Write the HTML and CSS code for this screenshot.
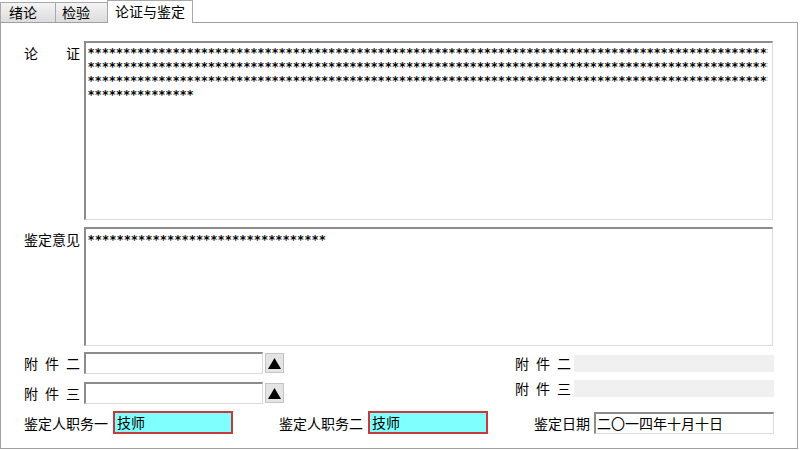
FILE: index.html
```html
<!DOCTYPE html>
<html lang="zh">
<head>
<meta charset="utf-8">
<title>论证与鉴定</title>
<link rel="stylesheet" href="styles.css">
</head>
<body>
<div class="tabs">
  <div class="tab tab-first">绪论</div>
  <div class="tab tab-second">检验</div>
  <div class="tab tab-active">论证与鉴定</div>
</div>
<div class="panel">
  <div class="row-area">
    <div class="label label-spread"><span>论</span><span>证</span></div>
    <div class="area area-big">
      <div class="stars">*************************************************************************************************</div>
      <div class="stars">*************************************************************************************************</div>
      <div class="stars">*************************************************************************************************</div>
      <div class="stars">***************</div>
    </div>
  </div>
  <div class="row-area row-second">
    <div class="label">鉴定意见</div>
    <div class="area area-small"><div class="stars">*********************************</div></div>
  </div>
  <div class="attach">
    <div class="attach-left">
      <div class="attach-row">
        <div class="label label-spread"><span>附</span><span>件</span><span>二</span></div>
        <div class="input input-file"></div>
        <div class="btn"><svg width="13" height="11" viewBox="0 0 13 11"><polygon points="6.5,0 13,11 0,11" fill="#000"/></svg></div>
      </div>
      <div class="attach-row">
        <div class="label label-spread"><span>附</span><span>件</span><span>三</span></div>
        <div class="input input-file"></div>
        <div class="btn"><svg width="13" height="11" viewBox="0 0 13 11"><polygon points="6.5,0 13,11 0,11" fill="#000"/></svg></div>
      </div>
    </div>
    <div class="attach-right">
      <div class="attach-row-r">
        <div class="label label-spread"><span>附</span><span>件</span><span>二</span></div>
        <div class="ro-field"></div>
      </div>
      <div class="attach-row-r">
        <div class="label label-spread"><span>附</span><span>件</span><span>三</span></div>
        <div class="ro-field"></div>
      </div>
    </div>
  </div>
  <div class="bottom-row">
    <div class="label label-duty">鉴定人职务一</div>
    <div class="duty">技师</div>
    <div class="label label-duty label-duty2">鉴定人职务二</div>
    <div class="duty">技师</div>
    <div class="label label-date">鉴定日期</div>
    <div class="input input-date">二〇一四年十月十日</div>
  </div>
</div>
</body>
</html>
```

FILE: styles.css
```css
html, body {
  margin: 0;
  padding: 0;
}
body {
  width: 800px;
  height: 450px;
  background: #ffffff;
  font-family: "Noto Sans CJK SC", "Noto Sans", sans-serif;
  font-size: 14px;
  color: #000;
  overflow: hidden;
}
.tabs {
  display: flex;
  align-items: flex-end;
  height: 22px;
}
.tab {
  box-sizing: border-box;
  height: 20px;
  line-height: 18px;
  padding-left: 8px;
  background: linear-gradient(#f4f4f4, #dcdcdc);
  border: 1px solid #a8a8a8;
  border-bottom: none;
  font-size: 14px;
  white-space: nowrap;
}
.tab-first {
  width: 56px;
}
.tab-second {
  width: 53px;
  margin-left: -1px;
  padding-left: 6px;
}
.tab-active {
  position: relative;
  z-index: 2;
  width: 86px;
  height: 23px;
  margin-bottom: -1px;
  margin-left: -1px;
  line-height: 21px;
  padding-left: 7px;
  background: #ffffff;
}
.panel {
  box-sizing: border-box;
  width: 798px;
  height: 427px;
  border: 1px solid #a0a0a0;
  padding: 18px 0 0 23px;
}
.row-area {
  display: flex;
  align-items: flex-start;
}
.row-second {
  margin-top: 7px;
}
.label {
  width: 56px;
  margin-right: 4px;
  line-height: 20px;
  white-space: nowrap;
  flex: none;
}
.row-area .label {
  margin-top: 2px;
}
.label-spread {
  display: flex;
  justify-content: space-between;
}
.area {
  box-sizing: border-box;
  width: 689px;
  border-top: 2px solid #8c8c8c;
  border-left: 2px solid #8c8c8c;
  border-right: 1px solid #dadada;
  border-bottom: 1px solid #dadada;
  padding: 3px 0 0 2px;
  overflow: hidden;
}
.area-big {
  height: 179px;
}
.area-small {
  height: 119px;
}
.stars {
  font-family: "DejaVu Sans", sans-serif;
  font-size: 12px;
  font-weight: bold;
  line-height: 14px;
  letter-spacing: 0.8px;
  white-space: pre;
  width: 680px;
  overflow: hidden;
}
.area-small .stars {
  padding-top: 1px;
  letter-spacing: 0.95px;
}
.attach {
  display: flex;
  justify-content: space-between;
  width: 750px;
  margin-top: 6px;
}
.attach-left {
  display: flex;
  flex-direction: column;
  gap: 8px;
}
.attach-row {
  display: flex;
  align-items: center;
  height: 22px;
}
.input {
  box-sizing: border-box;
  border-top: 2px solid #8c8c8c;
  border-left: 2px solid #8c8c8c;
  border-right: 1px solid #dadada;
  border-bottom: 1px solid #dadada;
  background: #fff;
}
.input-file {
  width: 179px;
  height: 22px;
}
.btn {
  box-sizing: border-box;
  width: 19px;
  height: 20px;
  margin-left: 2px;
  background: #e4e4e4;
  border: 1px solid #c4c4c4;
  display: flex;
  align-items: center;
  justify-content: center;
}
.btn svg {
  display: block;
}
.attach-right {
  display: flex;
  flex-direction: column;
  gap: 7px;
  padding-top: 2px;
  width: 259px;
}
.attach-row-r {
  display: flex;
  align-items: center;
  height: 18px;
}
.attach-row-r .label {
  margin-right: 3px;
}
.ro-field {
  width: 200px;
  height: 17px;
  background: #f0f0f0;
}
.bottom-row {
  display: flex;
  align-items: center;
  margin-top: 7px;
  height: 23px;
}
.label-duty {
  width: 83px;
  margin-right: 6px;
}
.label-duty2 {
  width: 84px;
  margin-left: 46px;
  margin-right: 5px;
}
.duty {
  box-sizing: border-box;
  width: 120px;
  height: 23px;
  background: #80ffff;
  border: 2px solid #c83a3a;
  line-height: 18px;
  padding-left: 2px;
}
.label-date {
  margin-left: 46px;
}
.input-date {
  width: 180px;
  height: 22px;
  line-height: 18px;
  padding-left: 1px;
}
```
